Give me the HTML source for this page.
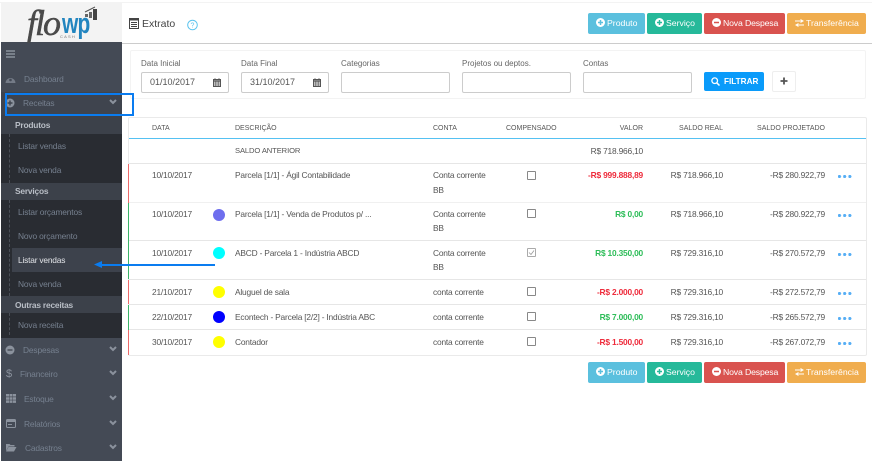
<!DOCTYPE html>
<html><head><meta charset="utf-8">
<style>
html,body{margin:0;padding:0;background:#fff}
#p{position:relative;width:872px;height:471px;overflow:hidden;background:#fff;font-family:"Liberation Sans",sans-serif;font-size:8.4px;color:#555}
#p div{position:absolute;white-space:nowrap}
.t{line-height:12px;height:12px;letter-spacing:-.2px}
.r{text-align:right}
.m{color:#76808f;font-size:8.4px;letter-spacing:-.15px}
.b{color:#b9bec6;font-weight:bold;font-size:8.4px;letter-spacing:-.2px}
.h{color:#555;font-size:7px;letter-spacing:0}
.l{color:#666;font-size:8px;letter-spacing:0}
.btn{border-radius:2px;color:#fff;font-size:8.7px;line-height:21px;height:21px;text-align:left;box-sizing:border-box}
.btn svg{position:absolute;top:4px}
.inp{border:1px solid #ccc;border-radius:2px;height:21px;box-sizing:border-box;background:#fff;font-size:9px;line-height:19px;color:#555;padding-left:8px}
.rl{height:1px;background:#e6e6e6;left:129px;width:737px}
.cb{width:7px;height:7px;border:1px solid #888;border-radius:1px;left:527px;background:#fff}
.dot{width:12px;height:12px;border-radius:50%;left:213px}
.d{left:838px;width:14px;height:3px;background:radial-gradient(circle at 1.5px 1.5px,#56aef5 1.5px,transparent 1.7px) 0 0/5.2px 3px repeat-x}
.g{color:#2ebd59;font-weight:bold}.e{color:#ee2b3b;font-weight:bold}
</style></head><body><div id="p">

<!-- top line -->
<div style="left:0;top:2px;width:872px;height:1px;background:#f3f3f3"></div>
<!-- sidebar -->
<div style="left:1px;top:3px;width:121px;height:39px;background:#f3f3f3"></div>
<div style="left:1px;top:42px;width:121px;height:419px;background:#444a55"></div>
<div style="left:122px;top:43px;width:750px;height:1px;background:#ccc"></div>

<!-- logo -->
<div style="left:27px;top:5px;font-family:'Liberation Serif',serif;font-style:italic;font-size:36px;line-height:36px;color:#4a4a4a;letter-spacing:-2px;-webkit-text-stroke:.5px #4a4a4a">flo</div>
<div style="left:62px;top:9px;font-family:'Liberation Sans',sans-serif;font-weight:bold;font-size:29px;line-height:30px;color:#2285bf;letter-spacing:-1px;transform:scaleX(.72);transform-origin:0 0">wp</div>
<div style="left:60px;top:34px;font-size:4px;line-height:5px;letter-spacing:1.2px;color:#777">CASH</div>
<svg style="position:absolute;left:84px;top:6px" width="14" height="15"><path d="M1 6 L11 1" stroke="#555" stroke-width="1"/><rect x="1" y="8" width="3" height="3" fill="#666"/><rect x="5" y="6" width="3" height="6" fill="#666"/><rect x="9" y="3" width="4" height="11" fill="#444"/></svg>

<svg style="position:absolute;left:5px;top:49px" width="11" height="10"><path d="M1 2h9M1 5h9M1 8h9" stroke="#8a919c" stroke-width="1.4"/></svg>

<svg style="position:absolute;left:5px;top:74px" width="11" height="10"><path d="M0.5 9 A5 5 0 1 1 10.5 9 Z" fill="#747b87"/><circle cx="5.5" cy="6" r="1.3" fill="#444a55"/></svg>
<div class="t m" style="left:24px;top:73px">Dashboard</div>

<!-- receitas -->
<div style="left:1px;top:92px;width:121px;height:23px;background:#3f444e"></div>
<svg style="position:absolute;left:5px;top:98px" width="10" height="10"><circle cx="5" cy="5" r="4.5" fill="#8b929d"/><path d="M2.5 5h5M5 2.5v5" stroke="#3f444e" stroke-width="1.4"/></svg>
<div class="t m" style="left:23px;top:97px">Receitas</div>
<svg style="position:absolute;left:109px;top:99px" width="8" height="6"><path d="M1 1l3 3 3-3" fill="none" stroke="#8b929d" stroke-width="2"/></svg>

<div style="left:1px;top:115px;width:121px;height:19px;background:#3c414a"></div>
<div style="left:1px;top:134px;width:121px;height:204px;background:#292c32"></div>
<div style="left:1px;top:183px;width:121px;height:17px;background:#3c414a"></div>
<div style="left:1px;top:296px;width:121px;height:17px;background:#3c414a"></div>
<div style="left:12px;top:248px;width:110px;height:24px;background:#3d424c"></div>
<div style="left:9px;top:134px;width:0;height:49px;border-left:1px dashed #4a4e56"></div>
<div style="left:9px;top:200px;width:0;height:96px;border-left:1px dashed #4a4e56"></div>
<div style="left:9px;top:313px;width:0;height:22px;border-left:1px dashed #4a4e56"></div>

<div class="t b" style="left:15px;top:119px">Produtos</div>
<div class="t m" style="left:18px;top:140px">Listar vendas</div>
<div class="t m" style="left:18px;top:164px">Nova venda</div>
<div class="t b" style="left:15px;top:185px">Serviços</div>
<div class="t m" style="left:18px;top:206px">Listar orçamentos</div>
<div class="t m" style="left:18px;top:230px">Novo orçamento</div>
<div class="t" style="left:18px;top:254px;color:#e2e4e8">Listar vendas</div>
<div class="t m" style="left:18px;top:278px">Nova venda</div>
<div class="t b" style="left:15px;top:299px">Outras receitas</div>
<div class="t m" style="left:18px;top:319px">Nova receita</div>

<svg style="position:absolute;left:5px;top:345px" width="10" height="10"><circle cx="5" cy="5" r="4.5" fill="#8b929d"/><path d="M2.5 5h5" stroke="#444a55" stroke-width="1.4"/></svg>
<div class="t m" style="left:23px;top:344px">Despesas</div>
<div class="t" style="left:6px;top:367px;color:#8b929d;font-size:11px;height:14px;line-height:14px">$</div>
<div class="t m" style="left:20px;top:368px">Financeiro</div>
<svg style="position:absolute;left:6px;top:394px" width="10" height="9"><path d="M0 0h3v2.500h-3zM3.500 0h3v2.500h-3zM7 0h3v2.500h-3zM0 3.200h3v2.500h-3zM3.500 3.200h3v2.500h-3zM7 3.200h3v2.500h-3zM0 6.400h3v2.500h-3zM3.500 6.400h3v2.500h-3zM7 6.400h3v2.500h-3z" fill="#8b929d"/></svg>
<div class="t m" style="left:24px;top:393px">Estoque</div>
<svg style="position:absolute;left:6px;top:419px" width="10" height="9"><rect x=".5" y=".5" width="9" height="8" rx="1" fill="none" stroke="#8b929d"/><rect x="1" y="1" width="8" height="2" fill="#8b929d"/><path d="M2 5.500h4" stroke="#8b929d"/></svg>
<div class="t m" style="left:24px;top:418px">Relatórios</div>
<svg style="position:absolute;left:6px;top:443px" width="11" height="9"><path d="M0 1h3.500l1 1h4v1.500h-6L0 8z M0 8.500l2.500-4.500h8l-2.500 4.500z" fill="#8b929d"/></svg>
<div class="t m" style="left:25px;top:442px">Cadastros</div>
<svg style="position:absolute;left:109px;top:346px" width="8" height="6"><path d="M1 1l3 3 3-3" fill="none" stroke="#8b929d" stroke-width="2"/></svg>
<svg style="position:absolute;left:109px;top:370px" width="8" height="6"><path d="M1 1l3 3 3-3" fill="none" stroke="#8b929d" stroke-width="2"/></svg>
<svg style="position:absolute;left:109px;top:395px" width="8" height="6"><path d="M1 1l3 3 3-3" fill="none" stroke="#8b929d" stroke-width="2"/></svg>
<svg style="position:absolute;left:109px;top:420px" width="8" height="6"><path d="M1 1l3 3 3-3" fill="none" stroke="#8b929d" stroke-width="2"/></svg>
<svg style="position:absolute;left:109px;top:444px" width="8" height="6"><path d="M1 1l3 3 3-3" fill="none" stroke="#8b929d" stroke-width="2"/></svg>

<!-- title -->
<svg style="position:absolute;left:129px;top:18px" width="10" height="11"><rect x=".5" y=".5" width="9" height="10" fill="#fff" stroke="#444"/><rect x="0" y="0" width="10" height="2.500" fill="#444"/><path d="M2 4.500h6M2 6.500h6M2 8.500h6" stroke="#444"/></svg>
<div style="left:142px;top:17px;font-size:10.500px;line-height:14px;color:#444">Extrato</div>
<svg style="position:absolute;left:187px;top:19px" width="12" height="12"><circle cx="5.500" cy="6" r="4.800" fill="none" stroke="#5cc4ee" stroke-width="1"/><text x="5.500" y="8.500" text-anchor="middle" font-size="7" font-family="Liberation Sans" fill="#5cc4ee">?</text></svg>

<!-- top buttons -->
<div class="btn" style="left:588px;top:13px;width:57px;background:#5bc0de;padding-left:19px">Produto<svg style="left:8px;top:5px" width="9" height="9"><circle cx="4.500" cy="4.500" r="4.500" fill="#fff"/><path d="M2 4.500h5M4.500 2v5" stroke="#5bc0de" stroke-width="1.500"/></svg></div>
<div class="btn" style="left:647px;top:13px;width:55px;background:#26b99a;padding-left:19px">Serviço<svg style="left:8px;top:5px" width="9" height="9"><circle cx="4.500" cy="4.500" r="4.500" fill="#fff"/><path d="M2 4.500h5M4.500 2v5" stroke="#26b99a" stroke-width="1.500"/></svg></div>
<div class="btn" style="left:704px;top:13px;width:81px;background:#d9534f;padding-left:19px;letter-spacing:-.15px">Nova Despesa<svg style="left:8px;top:5px" width="9" height="9"><circle cx="4.500" cy="4.500" r="4.500" fill="#fff"/><path d="M2 4.500h5" stroke="#d9534f" stroke-width="1.500"/></svg></div>
<div class="btn" style="left:787px;top:13px;width:79px;background:#f0ad4e;padding-left:19px">Transferência<svg style="left:8px;top:6px" width="9" height="8"><path d="M0 2h7M5.500 0.500L8 2 5.500 3.500M9 6H2M3.500 4.500L1 6l2.500 1.500" fill="none" stroke="#fff"/></svg></div>

<!-- filter panel -->
<div style="left:130px;top:50px;width:734px;height:47px;border:1px solid #f3f3f3;border-radius:2px"></div>
<div class="t l" style="left:141px;top:58px">Data Inicial</div>
<div class="t l" style="left:241px;top:58px">Data Final</div>
<div class="t l" style="left:341px;top:58px">Categorias</div>
<div class="t l" style="left:462px;top:58px">Projetos ou deptos.</div>
<div class="t l" style="left:583px;top:58px">Contas</div>
<div class="inp" style="left:141px;top:72px;width:88px">01/10/2017</div>
<div class="inp" style="left:241px;top:72px;width:88px">31/10/2017</div>
<div class="inp" style="left:341px;top:72px;width:109px"></div>
<div class="inp" style="left:462px;top:72px;width:109px"></div>
<div class="inp" style="left:583px;top:72px;width:109px"></div>
<svg style="position:absolute;left:213px;top:78px" width="8" height="9"><rect x=".5" y="1.500" width="7" height="7" fill="none" stroke="#555"/><path d="M0 3h8" stroke="#555" stroke-width="1.500"/><path d="M2 0v2M6 0v2M.5 5h7M.5 7h7M2.800 3v5M5.200 3v5" stroke="#555" stroke-width=".7"/></svg>
<svg style="position:absolute;left:313px;top:78px" width="8" height="9"><rect x=".5" y="1.500" width="7" height="7" fill="none" stroke="#555"/><path d="M0 3h8" stroke="#555" stroke-width="1.500"/><path d="M2 0v2M6 0v2M.5 5h7M.5 7h7M2.800 3v5M5.200 3v5" stroke="#555" stroke-width=".7"/></svg>
<div style="left:704px;top:72px;width:60px;height:19px;background:#0a9bfa;border-radius:2px;color:#fff;font-size:8.200px;line-height:19px;font-weight:bold;padding-left:20px;box-sizing:border-box">FILTRAR<svg style="position:absolute;left:7px;top:5px" width="9" height="9"><circle cx="3.700" cy="3.700" r="2.800" fill="none" stroke="#fff" stroke-width="1.300"/><path d="M5.800 5.800L8.500 8.500" stroke="#fff" stroke-width="1.500"/></svg></div>
<div style="left:772px;top:71px;width:24px;height:21px;border:1px solid #eee;box-sizing:border-box;border-radius:2px"></div>
<svg style="position:absolute;left:780px;top:77px" width="8" height="8"><path d="M0.500 4h7M4 0.500v7" stroke="#555" stroke-width="1.800"/></svg>

<!-- table -->
<div style="left:128px;top:117px;width:737px;height:237px;border:1px solid #eaeaea;border-radius:2px"></div>
<div style="left:129px;top:138px;width:737px;height:1px;background:#55c1f2"></div>
<div class="t h" style="left:152px;top:123px">DATA</div>
<div class="t h" style="left:235px;top:123px">DESCRIÇÃO</div>
<div class="t h" style="left:433px;top:123px">CONTA</div>
<div class="t h" style="left:506px;top:123px">COMPENSADO</div>
<div class="t h r" style="right:229px;top:123px">VALOR</div>
<div class="t h r" style="right:149px;top:123px">SALDO REAL</div>
<div class="t h r" style="right:47px;top:123px">SALDO PROJETADO</div>

<div class="t" style="left:235px;top:145px;font-size:7.600px;letter-spacing:-.1px">SALDO ANTERIOR</div>
<div class="t r" style="right:229px;top:145px">R$ 718.966,10</div>

<div class="rl" style="top:163px"></div>
<div class="rl" style="top:202px;background:#f0f0f0"></div>
<div class="rl" style="top:240px"></div>
<div class="rl" style="top:279px"></div>
<div class="rl" style="top:304px"></div>
<div class="rl" style="top:329px"></div>
<div style="left:128px;top:164px;width:1px;height:39px;background:#ee6b6b"></div>
<div style="left:128px;top:203px;width:1px;height:76px;background:#3cb56a"></div>
<div style="left:128px;top:280px;width:1px;height:24px;background:#ee6b6b"></div>
<div style="left:128px;top:305px;width:1px;height:25px;background:#3cb56a"></div>
<div style="left:128px;top:330px;width:1px;height:25px;background:#ee6b6b"></div>

<!-- row1 -->
<div class="t" style="left:152px;top:169px">10/10/2017</div>
<div class="t" style="left:235px;top:169px">Parcela [1/1] - Ágil Contabilidade</div>
<div class="t" style="left:433px;top:169px">Conta corrente</div>
<div class="t" style="left:433px;top:184px">BB</div>
<div class="cb" style="top:171px"></div>
<div class="t r e" style="right:229px;top:169px">-R$ 999.888,89</div>
<div class="t r" style="right:149px;top:169px">R$ 718.966,10</div>
<div class="t r" style="right:47px;top:169px">-R$ 280.922,79</div>
<div class="d" style="top:175px"></div>
<!-- row2 -->
<div class="t" style="left:152px;top:208px">10/10/2017</div>
<div class="dot" style="top:209px;background:#6e6eee"></div>
<div class="t" style="left:235px;top:208px">Parcela [1/1] - Venda de Produtos p/ ...</div>
<div class="t" style="left:433px;top:208px">Conta corrente</div>
<div class="t" style="left:433px;top:222px">BB</div>
<div class="cb" style="top:209px"></div>
<div class="t r g" style="right:229px;top:208px">R$ 0,00</div>
<div class="t r" style="right:149px;top:208px">R$ 718.966,10</div>
<div class="t r" style="right:47px;top:208px">-R$ 280.922,79</div>
<div class="d" style="top:214px"></div>
<!-- row3 -->
<div class="t" style="left:152px;top:247px">10/10/2017</div>
<div class="dot" style="top:247px;background:#0ff"></div>
<div class="t" style="left:235px;top:247px">ABCD - Parcela 1 - Indústria ABCD</div>
<div class="t" style="left:433px;top:247px">Conta corrente</div>
<div class="t" style="left:433px;top:261px">BB</div>
<div class="cb" style="top:248px;border-color:#aaa"></div>
<svg style="position:absolute;left:527px;top:248px" width="9" height="9"><path d="M2 4.500l2 2 3-4" fill="none" stroke="#999" stroke-width=".8"/></svg>
<div class="t r g" style="right:229px;top:247px">R$ 10.350,00</div>
<div class="t r" style="right:149px;top:247px">R$ 729.316,10</div>
<div class="t r" style="right:47px;top:247px">-R$ 270.572,79</div>
<div class="d" style="top:253px"></div>
<!-- row4 -->
<div class="t" style="left:152px;top:286px">21/10/2017</div>
<div class="dot" style="top:286px;background:#ff0"></div>
<div class="t" style="left:235px;top:286px">Aluguel de sala</div>
<div class="t" style="left:433px;top:286px">conta corrente</div>
<div class="cb" style="top:287px"></div>
<div class="t r e" style="right:229px;top:286px">-R$ 2.000,00</div>
<div class="t r" style="right:149px;top:286px">R$ 729.316,10</div>
<div class="t r" style="right:47px;top:286px">-R$ 272.572,79</div>
<div class="d" style="top:292px"></div>
<!-- row5 -->
<div class="t" style="left:152px;top:311px">22/10/2017</div>
<div class="dot" style="top:311px;background:#00f"></div>
<div class="t" style="left:235px;top:311px">Econtech - Parcela [2/2] - Indústria ABC</div>
<div class="t" style="left:433px;top:311px">conta corrente</div>
<div class="cb" style="top:312px"></div>
<div class="t r g" style="right:229px;top:311px">R$ 7.000,00</div>
<div class="t r" style="right:149px;top:311px">R$ 729.316,10</div>
<div class="t r" style="right:47px;top:311px">-R$ 265.572,79</div>
<div class="d" style="top:317px"></div>
<!-- row6 -->
<div class="t" style="left:152px;top:336px">30/10/2017</div>
<div class="dot" style="top:336px;background:#ff0"></div>
<div class="t" style="left:235px;top:336px">Contador</div>
<div class="t" style="left:433px;top:336px">conta corrente</div>
<div class="cb" style="top:337px"></div>
<div class="t r e" style="right:229px;top:336px">-R$ 1.500,00</div>
<div class="t r" style="right:149px;top:336px">R$ 729.316,10</div>
<div class="t r" style="right:47px;top:336px">-R$ 267.072,79</div>
<div class="d" style="top:342px"></div>

<!-- bottom buttons -->
<div class="btn" style="left:588px;top:362px;width:57px;background:#5bc0de;padding-left:19px">Produto<svg style="left:8px;top:5px" width="9" height="9"><circle cx="4.500" cy="4.500" r="4.500" fill="#fff"/><path d="M2 4.500h5M4.500 2v5" stroke="#5bc0de" stroke-width="1.500"/></svg></div>
<div class="btn" style="left:647px;top:362px;width:55px;background:#26b99a;padding-left:19px">Serviço<svg style="left:8px;top:5px" width="9" height="9"><circle cx="4.500" cy="4.500" r="4.500" fill="#fff"/><path d="M2 4.500h5M4.500 2v5" stroke="#26b99a" stroke-width="1.500"/></svg></div>
<div class="btn" style="left:704px;top:362px;width:81px;background:#d9534f;padding-left:19px;letter-spacing:-.15px">Nova Despesa<svg style="left:8px;top:5px" width="9" height="9"><circle cx="4.500" cy="4.500" r="4.500" fill="#fff"/><path d="M2 4.500h5" stroke="#d9534f" stroke-width="1.500"/></svg></div>
<div class="btn" style="left:787px;top:362px;width:79px;background:#f0ad4e;padding-left:19px">Transferência<svg style="left:8px;top:6px" width="9" height="8"><path d="M0 2h7M5.500 0.500L8 2 5.500 3.500M9 6H2M3.500 4.500L1 6l2.500 1.500" fill="none" stroke="#fff"/></svg></div>

<!-- annotations -->
<div style="left:5px;top:93px;width:125px;height:19px;border:2px solid #0a7cf0"></div>
<div style="left:100px;top:263.500px;width:115px;height:2px;background:#0a7cf0"></div>
<svg style="position:absolute;left:94px;top:261px" width="8" height="7"><path d="M0 3.500L8 0v7z" fill="#0a7cf0"/></svg>
</div></body></html>
